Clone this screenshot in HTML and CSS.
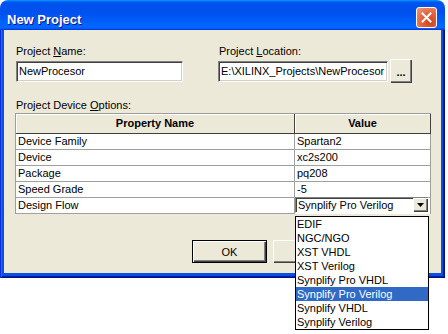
FILE: index.html
```html
<!DOCTYPE html>
<html lang="en">
<head>
    <meta charset="UTF-8">
    <title>New Project</title>
    <link rel="stylesheet" href="styles.css">
</head>
<body>
    <div class="window">
        <div class="titlebar">
            <span class="title">New Project</span>
            <button class="close" aria-label="Close">
                <svg width="11" height="11" viewBox="0 0 11 11">
                    <path d="M1.5 1.5 L9.5 9.5 M9.5 1.5 L1.5 9.5" stroke="#fff" stroke-width="2" stroke-linecap="square"/>
                </svg>
            </button>
        </div>

        <div class="frame">
            <div class="content">
                <div class="top-fields">
                    <div class="field">
                        <label class="label" for="projectName">Project <u>N</u>ame:</label>
                        <div class="field-row">
                            <input class="input name-input" id="projectName" type="text" value="NewProcesor">
                        </div>
                    </div>
                    <div class="field">
                        <label class="label" for="projectLocation">Project <u>L</u>ocation:</label>
                        <div class="field-row">
                            <input class="input loc-input" id="projectLocation" type="text" value="E:\XILINX_Projects\NewProcesor">
                            <button class="btn browse">...</button>
                        </div>
                    </div>
                </div>

                <div class="label options-label">Project Device <u>O</u>ptions:</div>
                <div class="props">
                    <div class="cell head">Property Name</div>
                    <div class="cell head">Value</div>

                    <div class="cell">Device Family</div>
                    <div class="cell">Spartan2</div>
                    <div class="cell">Device</div>
                    <div class="cell">xc2s200</div>
                    <div class="cell">Package</div>
                    <div class="cell">pq208</div>
                    <div class="cell">Speed Grade</div>
                    <div class="cell">-5</div>
                    <div class="cell">Design Flow</div>
                    <div class="cell combo-cell">
                        <div class="combo">
                            <span class="combo-text">Synplify Pro Verilog</span>
                            <span class="combo-btn">
                                <svg width="7" height="4" viewBox="0 0 7 4"><polygon points="0,0 7,0 3.5,4" fill="#000"/></svg>
                            </span>
                        </div>
                    </div>
                </div>

                <div class="actions">
                    <button class="btn default">OK</button>
                    <!-- these two sit under the open list -->
                    <button class="btn" aria-label="Cancel"></button>
                    <button class="btn" aria-label="Help"></button>
                </div>
            </div>
        </div>

        <!-- open list of the Design Flow combo -->
        <ul class="dropdown">
            <li>EDIF</li>
            <li>NGC/NGO</li>
            <li>XST VHDL</li>
            <li>XST Verilog</li>
            <li>Synplify Pro VHDL</li>
            <li class="selected">Synplify Pro Verilog</li>
            <li>Synplify VHDL</li>
            <li>Synplify Verilog</li>
        </ul>
    </div>
</body>
</html>
```

FILE: styles.css
```css
/* Reset */
* {
    margin: 0;
    padding: 0;
    box-sizing: border-box;
}

html, body {
    height: 100%;
}

body {
    min-height: 334px;
    background-color: #fff;
    font-family: "Liberation Sans", Arial, sans-serif;
    font-size: 11px;
    color: #000;
}

/* Window frame */
.window {
    position: relative;
    width: 445px;
}

.titlebar {
    height: 30px;
    display: flex;
    align-items: flex-start;
    border-radius: 8px 8px 0 0;
    background: linear-gradient(180deg, #0997ff, #0053ee 8%, #0050ee 40%, #0066ff 88%, #0066ff 93%, #005bff 95%, #003dd7 96%, #003dd7);
}

.title {
    margin: 12px 0 0 7px;
    line-height: 16px;
    font-size: 13px;
    font-weight: bold;
    color: #fff;
    text-shadow: 1px 1px #0f1089;
}

.close {
    margin: 7px 8px 0 auto;
    width: 21px;
    height: 21px;
    border: 1px solid #fff;
    border-radius: 3px;
    background: radial-gradient(circle at 70% 75%, #cc4621 0%, #e2613d 45%, #f09a7e 100%);
    display: flex;
    align-items: center;
    justify-content: center;
}

.frame {
    padding: 0 4px 5px 4px;
    background-color: #0a4ee4;
    box-shadow: inset 1px 0 #0831d9, inset -1px -1px #00138c, inset 2px 0 #166aee, inset -2px -2px #001ea0;
}

.content {
    height: 243px;
    padding: 15px 10px 0 11px;
    background-color: #ece9d8;
}

/* Top fields */
.top-fields {
    display: grid;
    grid-template-columns: 203px 212px;
}

.label {
    display: block;
    line-height: 13px;
    padding-left: 1px;
}

.label u {
    text-decoration: underline;
}

.field-row {
    display: flex;
    align-items: center;
    height: 24px;
    margin-top: 1px;
}

.input {
    height: 21px;
    padding: 0 2px;
    font-family: "Liberation Sans", Arial, sans-serif;
    font-size: 11px;
    color: #000;
    background-color: #fff;
    border: 1px solid;
    border-color: #808080 #fff #fff #808080;
    box-shadow: inset 1px 1px #404040, inset -1px -1px #d4d0c8;
    outline: none;
}

.name-input {
    width: 167px;
    margin-left: 1px;
}

.loc-input {
    width: 170px;
}

/* Buttons */
.btn {
    width: 75px;
    height: 23px;
    font-family: "Liberation Sans", Arial, sans-serif;
    font-size: 11px;
    color: #000;
    background-color: #ece9d8;
    border: none;
    box-shadow: inset 1px 1px #fff, inset -1px -1px #404040, inset -2px -2px #808080;
}

.btn.default {
    border: 1px solid #000;
}

.browse {
    width: 22px;
    height: 24px;
    margin-left: 2px;
    font-weight: bold;
    padding-top: 2px;
}

/* Property grid */
.options-label {
    margin-top: 16px;
}

.props {
    display: grid;
    grid-template-columns: 279px 136px;
    width: 416px;
    margin-top: 1px;
    border-left: 1px solid #9d9d9d;
    border-top: 1px solid #9d9d9d;
}

.cell {
    height: 16px;
    line-height: 15px;
    padding-left: 2px;
    background-color: #fff;
    border-right: 1px solid #a0a0a0;
    border-bottom: 1px solid #a0a0a0;
    white-space: nowrap;
}

.cell.head {
    height: 20px;
    line-height: 19px;
    padding-left: 0;
    text-align: center;
    font-weight: bold;
    background-color: #ece9d8;
    border-right-color: #404040;
    border-bottom-color: #404040;
    box-shadow: inset 1px 1px #fff;
}

.combo-cell {
    padding: 0;
    border-bottom: none;
}

.combo {
    display: flex;
    height: 16px;
    margin-top: -1px;
    width: 134px;
    background-color: #fff;
    border: 1px solid;
    border-color: #808080 #fff #fff #808080;
    box-shadow: inset 1px 1px #404040;
}

.combo-text {
    flex: 1;
    padding-left: 2px;
    line-height: 14px;
}

.combo-btn {
    width: 15px;
    height: 14px;
    display: flex;
    align-items: center;
    justify-content: center;
    background-color: #ece9d8;
    box-shadow: inset 1px 1px #fff, inset -1px -1px #404040, inset -2px -2px #808080;
}

/* Dialog buttons */
.actions {
    display: flex;
    justify-content: flex-end;
    gap: 6px;
    margin-top: 26px;
    padding-right: 2px;
}

/* Open dropdown list */
.dropdown {
    position: absolute;
    left: 295px;
    top: 216px;
    width: 134px;
    list-style: none;
    background-color: #fff;
    border: 1px solid #000;
}

.dropdown li {
    height: 14px;
    line-height: 14px;
    padding-left: 1px;
    white-space: nowrap;
}

.dropdown li.selected {
    background-color: #316ac5;
    color: #fff;
}
```
